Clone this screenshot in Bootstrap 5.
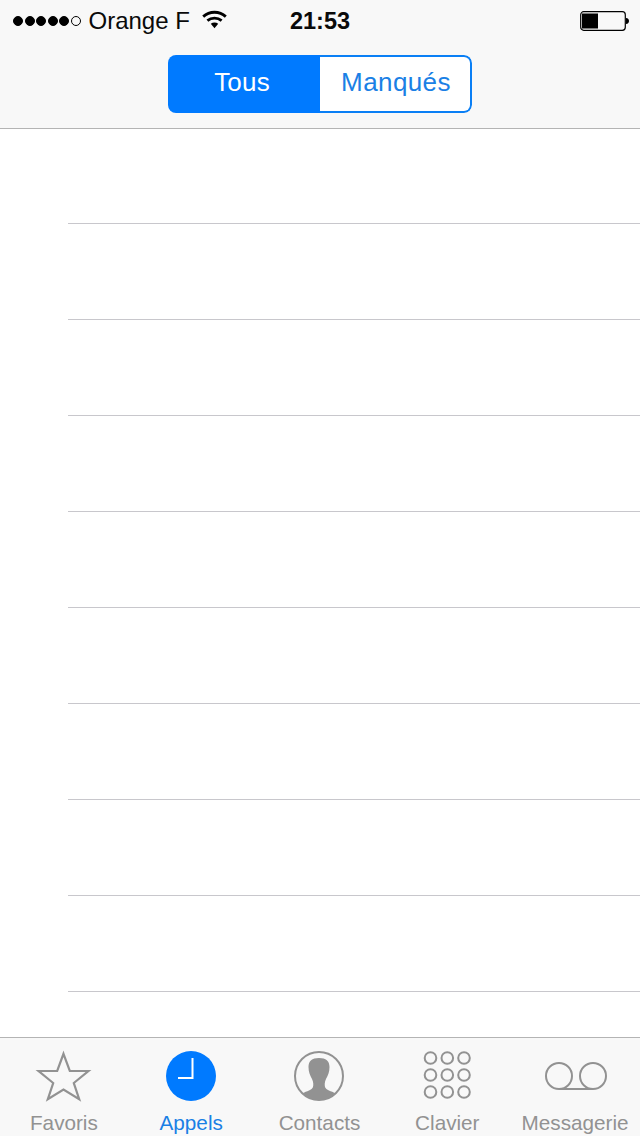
<!DOCTYPE html>
<html lang="fr">
<head>
<meta charset="utf-8">
<title>Appels</title>
<link rel="stylesheet" href="https://cdn.jsdelivr.net/npm/bootstrap@5.3.0/dist/css/bootstrap.min.css">
<style>
html,body{margin:0;height:1136px;overflow:hidden;background:#fff;font-family:"Liberation Sans",Arial,sans-serif}
.phone{width:640px;height:1136px}
.top-area{height:129px;background:#f8f8f8;border-bottom:1px solid #b4b4b4}
.status{height:40px;padding:1px 10px 0 13px;font-size:24px;line-height:40px;color:#0a0a0a}
.status-left{width:240px}
.signal{gap:1.5px;margin-right:8px}
.sig-dot{width:10px;height:10px;border-radius:50%;background:#000;border:1px solid #000}
.sig-dot.off{background:transparent}
.wifi{margin-left:12px;margin-top:-3px}
.clock{font-weight:700;font-size:23.5px;width:64px;text-align:center;margin-left:35px}
.batt{margin-left:auto}
.seg-wrap{margin-top:15px}
.seg{width:304px;height:58px;border-radius:8px;overflow:hidden}
.seg-on,.seg-off{font-size:26px;width:152px;letter-spacing:.2px}
.seg-on{background:#007aff;color:#fff;padding-right:4px;line-height:54px}
.seg-off{background:#fff;color:#1a80e5;border:2px solid #0a7ff5;border-left:0;border-radius:0 8px 8px 0;padding-left:2px;line-height:50px;letter-spacing:.4px}
.rows{flex:1 1 auto;background:#fff}
.rows .call-row{height:96px;padding:0;margin-left:68px;border:0;border-bottom:1px solid #c8c7cc;border-radius:0;background:transparent}
.rows .call-row:first-child{height:95px}
.rows .call-row:last-child{border-bottom-width:1px}
.tabs{height:99px;background:#f8f8f8;border-top:1px solid #b4b4b4;padding:12px 1px 0 0}
.tab{flex:1 1 0;color:#929292;font-size:20.7px;line-height:24px}
.tab.active{color:#1a80e5}
.tab.active span{margin-right:1px}
.tab svg{display:block;margin-bottom:9px}
</style>
</head>
<body>
<div class="phone d-flex flex-column">
  <header class="top-area">
    <div class="status d-flex align-items-center">
      <div class="status-left d-flex align-items-center">
        <div class="signal d-flex align-items-center">
          <span class="sig-dot"></span><span class="sig-dot"></span><span class="sig-dot"></span><span class="sig-dot"></span><span class="sig-dot"></span><span class="sig-dot off"></span>
        </div>
        <span>Orange F</span>
        <svg class="wifi" width="25" height="19" viewBox="0 0 25 19" aria-hidden="true">
          <g fill="none" stroke="#000" stroke-width="2.8">
            <path d="M1.200 6.600C7.600 .8 17.400 .8 23.800 6.600"/>
            <path d="M5.400 10.600C9.400 7.200 15.600 7.200 19.600 10.600"/>
          </g>
          <path d="M8.800 13.800C11 12 14 12 16.200 13.800L12.500 18.200Z" fill="#000"/>
        </svg>
      </div>
      <div class="clock">21:53</div>
      <svg class="batt" width="50" height="20" viewBox="0 0 50 20" aria-hidden="true">
        <rect x=".7" y=".7" width="44.600" height="18.600" rx="3" fill="none" stroke="#000" stroke-width="1.200"/>
        <rect x="2" y="2.500" width="16" height="15" fill="#000"/>
        <path d="M46 7c2.200.3 3 1.400 3 3s-.8 2.700-3 3Z" fill="#000"/>
      </svg>
    </div>
    <div class="seg-wrap d-flex justify-content-center">
      <div class="seg d-flex text-center">
        <div class="seg-on">Tous</div>
        <div class="seg-off">Manqués</div>
      </div>
    </div>
  </header>
  <main class="rows list-group list-group-flush">
    <div class="list-group-item call-row"></div>
    <div class="list-group-item call-row"></div>
    <div class="list-group-item call-row"></div>
    <div class="list-group-item call-row"></div>
    <div class="list-group-item call-row"></div>
    <div class="list-group-item call-row"></div>
    <div class="list-group-item call-row"></div>
    <div class="list-group-item call-row"></div>
    <div class="list-group-item call-row"></div>
  </main>
  <nav class="tabs d-flex">
    <div class="tab d-flex flex-column align-items-center">
      <svg width="64" height="52" viewBox="0 0 64 52" aria-hidden="true">
        <path d="M31.500 3.800 L37.800 21 L56.400 21 L41.800 33 L47.200 49.200 L31.500 39.500 L15.800 49.200 L21.200 33 L6.600 21 L25.200 21 Z" fill="none" stroke="#929292" stroke-width="2.200" stroke-linejoin="miter"/>
      </svg>
      <span>Favoris</span>
    </div>
    <div class="tab active d-flex flex-column align-items-center">
      <svg width="64" height="52" viewBox="0 0 64 52" aria-hidden="true">
        <circle cx="31" cy="26" r="25" fill="#007aff"/>
        <path d="M18 28H32.500V8" fill="none" stroke="#fff" stroke-width="2"/>
      </svg>
      <span>Appels</span>
    </div>
    <div class="tab d-flex flex-column align-items-center">
      <svg width="64" height="52" viewBox="0 0 64 52" aria-hidden="true">
        <circle cx="32" cy="26" r="24" fill="none" stroke="#929292" stroke-width="2"/>
        <path d="M32 8C25 8 21.500 11 21.500 17C21.500 22 23 25 25 29C26.500 32 26.500 35 26 37C25 40 20 41 15 43.500C19.500 47.800 25.500 50 32 50C38.500 50 44.500 47.800 49 43.500C44 41 39 40 38 37C37.500 35 37.500 32 39 29C41 25 42.500 22 42.500 17C42.500 11 39 8 32 8Z" fill="#929292"/>
      </svg>
      <span>Contacts</span>
    </div>
    <div class="tab d-flex flex-column align-items-center">
      <svg width="64" height="52" viewBox="0 0 64 52" aria-hidden="true">
        <g fill="none" stroke="#929292" stroke-width="2">
          <circle cx="15.500" cy="8" r="5.800"/><circle cx="32.300" cy="8" r="5.800"/><circle cx="49" cy="8" r="5.800"/>
          <circle cx="15.500" cy="25" r="5.800"/><circle cx="32.300" cy="25" r="5.800"/><circle cx="49" cy="25" r="5.800"/>
          <circle cx="15.500" cy="42" r="5.800"/><circle cx="32.300" cy="42" r="5.800"/><circle cx="49" cy="42" r="5.800"/>
        </g>
      </svg>
      <span>Clavier</span>
    </div>
    <div class="tab d-flex flex-column align-items-center">
      <svg width="64" height="52" viewBox="0 0 64 52" aria-hidden="true">
        <g fill="none" stroke="#929292" stroke-width="2">
          <circle cx="16" cy="26" r="13"/><circle cx="50" cy="26" r="13"/>
          <path d="M16 39H50"/>
        </g>
      </svg>
      <span>Messagerie</span>
    </div>
  </nav>
</div>
<script src="https://cdn.jsdelivr.net/npm/bootstrap@5.3.0/dist/js/bootstrap.bundle.min.js"></script>
</body>
</html>
